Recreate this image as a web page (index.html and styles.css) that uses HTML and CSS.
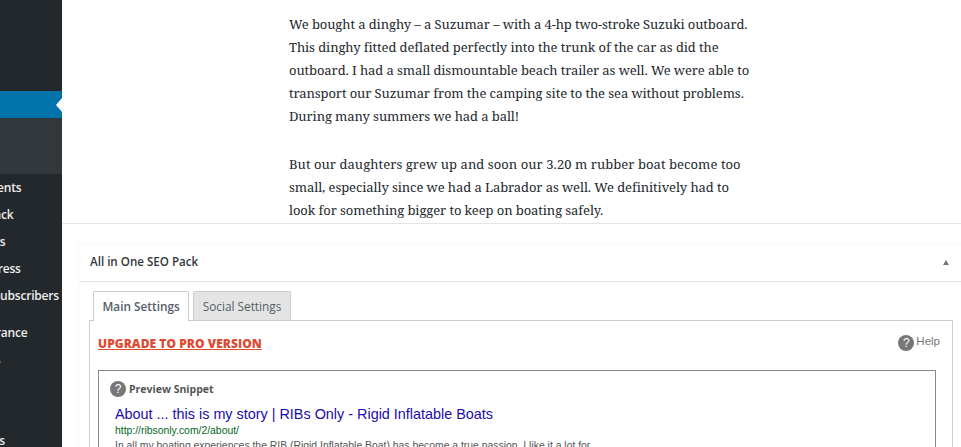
FILE: index.html
```html
<!DOCTYPE html>
<html lang="en">
<head>
<meta charset="utf-8">
<title>All in One SEO Pack</title>
<link rel="stylesheet" href="styles.css">
</head>
<body>
<div class="app">
  <nav class="sidebar">
    <div class="current"><span class="arrow"></span></div>
    <div class="submenu"></div>
    <ul class="menu">
      <li>Comments</li>
      <li>Feedback</li>
      <li>Reviews</li>
      <li>WordPress</li>
      <li>Email Subscribers</li>
      <li class="sep">Appearance</li>
      <li>Plugins</li>
      <li>Users</li>
      <li>Tools</li>
      <li>Settings</li>
    </ul>
  </nav>
  <main class="main">
    <section class="editor">
      <p>We bought a dinghy – a Suzumar – with a 4-hp two-stroke Suzuki outboard.<br>
      This dinghy fitted deflated perfectly into the trunk of the car as did the<br>
      outboard. I had a small dismountable beach trailer as well. We were able to<br>
      transport our Suzumar from the camping site to the sea without problems.<br>
      During many summers we had a ball!</p>
      <p><span class="wide">But our daughters grew up and soon our 3.20 m rubber boat become too</span><br>
      small, especially since we had a Labrador as well. We definitively had to<br>
      look for something bigger to keep on boating safely.</p>
    </section>
    <section class="postbox">
      <header class="box-head">
        <h2>All in One SEO Pack</h2>
        <span class="toggle"></span>
      </header>
      <div class="box-body">
        <div class="tabs">
          <span class="tab active">Main Settings</span>
          <span class="tab">Social Settings</span>
        </div>
        <div class="panel">
          <div class="panel-top">
            <a class="upgrade" href="#">UPGRADE TO PRO VERSION</a>
            <span class="help"><span class="qmark">?</span><span class="help-text">Help</span></span>
          </div>
          <div class="snippet">
            <div class="snippet-title"><span class="qmark">?</span><span>Preview Snippet</span></div>
            <div class="serp">
              <a class="serp-title" href="#">About ... this is my story | RIBs Only - Rigid Inflatable Boats</a>
              <div class="serp-url">http://ribsonly.com/2/about/</div>
              <div class="serp-desc">In all my boating experiences the RIB (Rigid Inflatable Boat) has become a true passion. I like it a lot for</div>
            </div>
          </div>
        </div>
      </div>
    </section>
  </main>
</div>
</body>
</html>
```
FILE: styles.css
```css
* { box-sizing: border-box; }
html, body { margin: 0; padding: 0; height: 447px; overflow: hidden; background: #fff; }
.app { display: flex; width: 961px; height: 447px; overflow: hidden; }

.sidebar {
  flex: 0 0 62px; width: 62px; height: 447px; background: #23282d;
  padding-top: 91px; overflow: hidden;
  font: 600 12px/27px "Open Sans", "Liberation Sans", sans-serif; letter-spacing: -0.2px; color: #eee;
}
.current { position: relative; height: 27px; background: #0073aa; }
.arrow {
  position: absolute; right: 0; top: 7px; width: 0; height: 0;
  border-style: solid; border-width: 7px 6px 7px 0;
  border-color: transparent #fff transparent transparent;
}
.submenu { height: 56px; background: #32373c; }
.menu { list-style: none; margin: 0 0 0 -40px; padding: 0; width: 200px; }
.menu li { height: 27px; white-space: nowrap; }
.menu .sep { margin-top: 10px; }

.main { flex: 1; min-width: 0; height: 447px; overflow: hidden; }
.editor {
  height: 224px; padding: 13px 0 0 227px; border-bottom: 1px solid #e5e5e5;
  font: 13px/23px "Noto Serif", "DejaVu Serif", serif; letter-spacing: -0.09px; color: #23282d;
  white-space: nowrap;
}
.editor p { margin: 0 0 25px; }
.editor .wide { letter-spacing: 0.06px; }

.postbox { margin: 19px 0 0 16px; border-left: 1px solid #f8f8f8; border-top: 1px solid #f8f8f8; }
.box-head {
  display: flex; align-items: center; justify-content: space-between;
  height: 38px; padding: 0 12px 1px 11px; border-bottom: 1px solid #e5e5e5;
}
.box-head h2 { margin: 0; font: 600 11.6px/1 "Open Sans", "Liberation Sans", sans-serif; color: #32373c; }
.toggle {
  width: 0; height: 0; border-style: solid; border-width: 0 3px 5px 3px;
  border-color: transparent transparent #72777c transparent;
}
.box-body { padding: 9px 8px 0 10px; }
.tabs { display: flex; gap: 4px; padding-left: 4px; height: 30px; }
.tab {
  height: 29px; padding: 0 8.5px; border: 1px solid #ccc; border-bottom: 0;
  background: #e4e4e4; border-radius: 2px 2px 0 0;
  font: 400 11.8px/29px "Open Sans", "Liberation Sans", sans-serif; color: #555d66;
}
.tab.active { height: 30px; padding: 0 8.5px; background: #fff; font-weight: 600; position: relative; z-index: 1; }
.panel { margin-top: -1px; border: 1px solid #ccc; padding: 0 16px 0 8px; height: 200px; }
.panel-top { display: flex; justify-content: space-between; height: 49px; padding-top: 14px; }
.upgrade { font: 800 12px/18px "Open Sans", "Liberation Sans", sans-serif; letter-spacing: 0.05px; color: #dd4b32; }
.help { display: flex; gap: 2px; margin-right: -4px; font: 11.5px/13px "Liberation Sans", sans-serif; color: #777; }
.qmark {
  flex: none; width: 16px; height: 16px; border-radius: 50%; background: #777; color: #fff;
  font: 400 12px/16px "Liberation Sans", sans-serif; text-align: center;
}
.snippet { border: 1px solid #888; padding: 10px 11px; }
.snippet-title {
  display: flex; align-items: center; gap: 3px;
  font: 700 10.5px/16px "Open Sans", "Liberation Sans", sans-serif; color: #555;
}
.serp { padding-left: 5px; font-family: "Liberation Sans", Arial, sans-serif; }
.serp-title { display: block; margin-top: 7px; font-size: 14.4px; line-height: 20px; color: #1a0dab; text-decoration: none; white-space: nowrap; }
.serp-url { font-size: 10.4px; line-height: 14px; color: #006621; }
.serp-desc { margin-top: 1px; font-size: 10.4px; line-height: 14px; color: #545454; white-space: nowrap; }
```
